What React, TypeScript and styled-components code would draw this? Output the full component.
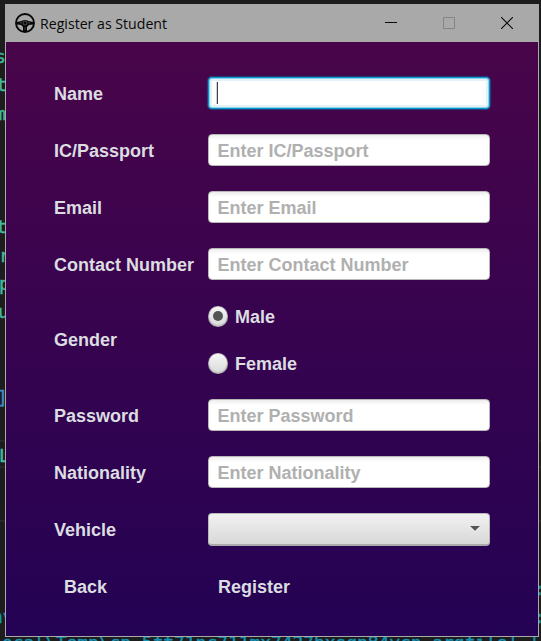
import React from "react";
import styled, { createGlobalStyle, css } from "styled-components";

const Global = createGlobalStyle`
  *, *::before, *::after { box-sizing: border-box; }
  html, body { margin: 0; overflow: hidden; background: #1d1d1d; }
`;

const Desktop = styled.main`
  position: relative;
  width: 541px;
  height: 641px;
  padding: 4px 2px 4px 5px;
  overflow: hidden;
  background: #1d1d1d;
  font-family: "Liberation Sans", Arial, sans-serif;
`;

const CodeFragment = styled.span<{ $x: number; $y: number; $color: string }>`
  position: absolute;
  left: ${(p) => p.$x}px;
  top: ${(p) => p.$y}px;
  color: ${(p) => p.$color};
  font: 18px/22px "DejaVu Sans Mono", monospace;
  letter-spacing: -0.08px;
  -webkit-text-stroke: 0.4px ${(p) => p.$color};
  white-space: pre;
`;

const GuideLine = styled.i<{ $y: number }>`
  position: absolute;
  left: 0;
  top: ${(p) => p.$y}px;
  width: 541px;
  height: 2px;
  background: #292929;
`;

const Window = styled.section`
  position: relative;
  width: 534px;
  height: 633px;
  border: 1px solid #a9a9a9;
  border-top: 0;
  background: linear-gradient(#4b0549, #240254);
  background-origin: border-box;
`;

const TitleBar = styled.header`
  display: flex;
  align-items: center;
  height: 38px;
  padding: 0 2px 0 9px;
  background: #a9a9a9;
`;

const Title = styled.h1`
  flex: 1;
  margin: 0 0 0 5px;
  color: #080808;
  font: 400 15px/20px "Open Sans", sans-serif;
  white-space: nowrap;
  span { display: inline-block; transform: scaleX(0.942); transform-origin: left; }
`;

const WindowButton = styled.button`
  display: grid;
  place-items: center;
  width: 58px;
  height: 38px;
  padding: 0;
  border: 0;
  background: none;
  svg { display: block; }
`;

const Form = styled.form`
  display: grid;
  grid-template-columns: 154px 282px;
  grid-template-rows: repeat(4, 32px) 69px repeat(4, 32px);
  row-gap: 25px;
  align-items: center;
  padding: 35px 0 0 48px;
`;

const textStyle = css`
  font: 700 18px/22px "Liberation Sans", Arial, sans-serif;
  white-space: nowrap;
`;

const Label = styled.label<{ $tall?: boolean }>`
  ${textStyle}
  padding-top: ${(p) => (p.$tall ? 0 : 2)}px;
  color: #dbdde0;
`;

const Input = styled.input`
  ${textStyle}
  width: 282px;
  height: 32px;
  padding: 2px 9px 0 8.5px;
  border: 1px solid #b8b8b8;
  border-radius: 4px;
  outline: 0;
  color: #333;
  background: linear-gradient(#ededed, #fff 5px);
  &::placeholder { color: #b0b0b0; opacity: 1; }
`;

const FocusedField = styled.div`
  display: flex;
  align-items: center;
  width: 282px;
  height: 32px;
  padding-left: 8px;
  border: 1px solid #0795cb;
  border-radius: 4px;
  background: #fff;
  box-shadow: inset 0 0 0 1px #8dd4eb, inset 0 0 0 3px #e3f2f7, 0 0 1px 1px #087eac80;
`;

const Caret = styled.i`
  width: 1px;
  height: 22px;
  background: #444;
  box-shadow: -1px 0 #cfcfcf;
`;

const Choices = styled.div`
  display: grid;
  grid-template-rows: 22px 22px;
  gap: 25px;
`;

const Choice = styled.label`
  ${textStyle}
  display: flex;
  align-items: center;
  gap: 7px;
  color: #dbdde0;
`;

const ChoiceText = styled.span`
  padding-top: 2px;
`;

const Radio = styled.span<{ $selected?: boolean }>`
  display: grid;
  place-items: center;
  width: 20px;
  height: 21px;
  border: 1px solid #b5b5b5;
  border-top-color: #ccc;
  border-radius: 50%;
  background: linear-gradient(#f5f5f5, #dadada);
  box-shadow: inset 0 1px 0 #fff, inset 0 -1px 0 #c4c4c4;
  &::after {
    content: "";
    width: 10px;
    height: 10px;
    border-radius: 50%;
    background: ${(p) => (p.$selected ? "#555" : "transparent")};
  }
`;

const Select = styled.button`
  display: flex;
  align-items: center;
  justify-content: flex-end;
  width: 282px;
  height: 33px;
  padding: 0 9px 0 0;
  border: 1px solid #b8b8b8;
  border-bottom: 2px solid #aaa;
  border-radius: 4px;
  background: linear-gradient(#f1f1f1, #d8d8d8);
`;

const Action = styled.button`
  ${textStyle}
  justify-self: start;
  padding: 2px 10px 0;
  border: 0;
  color: #dbdde0;
  background: none;
`;

const fragments = [
  { x: -5, y: 46, text: "s", color: "#42b9a0" },
  { x: -4, y: 74, text: "t", color: "#42b9a0" },
  { x: -5, y: 103, text: "m", color: "#42b9a0" },
  { x: -4, y: 216, text: "t", color: "#42b9a0" },
  { x: -1, y: 245, text: "r", color: "#42b9a0" },
  { x: -1, y: 273, text: "p", color: "#42b9a0" },
  { x: -2, y: 301, text: "u", color: "#42b9a0" },
  { x: -3, y: 387, text: "]", color: "#438dca" },
  { x: -1, y: 445, text: "L", color: "#42b9a0" },
  { x: -8, y: 606, text: "nv", color: "#1593b5" },
  { x: 2, y: 632, text: "ocal\\Temp\\cp_5ft71nc711mx7427bxsqp84ycn.argfile' '", color: "#1593b5" },
  { x: 534, y: 578, text: ":", color: "#1593b5" },
  { x: 534, y: 606, text: ":", color: "#1593b5" },
];

const WheelIcon = () => (
  <svg width="20" height="20" viewBox="0 0 20 20">
    <circle cx="10" cy="10" r="9" fill="none" stroke="#080808" strokeWidth="1.9" />
    <path d="M2 9L6.5 8Q10 5.8 13.5 8L18 9V11.5L14 12L12 14V18H8V14L6 12L2 11.5Z" fill="#080808" />
    <circle cx="10" cy="10" r="2" fill="none" stroke="#777" strokeWidth=".6" />
    <path d="M5 9.8h2m6 0h2M10 14v3" stroke="#666" strokeWidth=".6" />
  </svg>
);

export default function App() {
  return (
    <>
      <Global />
      <Desktop>
        <GuideLine $y={440} />
        <GuideLine $y={466} />
        <GuideLine $y={520} />
        {fragments.map((f) => (
          <CodeFragment key={`${f.x}-${f.y}`} $x={f.x} $y={f.y} $color={f.color}>{f.text}</CodeFragment>
        ))}
        <Window>
          <TitleBar>
            <WheelIcon />
            <Title><span>Register as Student</span></Title>
            <WindowButton aria-label="Minimize">
              <svg width="12" height="12"><path d="M0 5.5h12" stroke="#080808" /></svg>
            </WindowButton>
            <WindowButton aria-label="Maximize" disabled>
              <svg width="12" height="12"><path d="M.5.5h11v11H.5z" fill="none" stroke="#858585" /></svg>
            </WindowButton>
            <WindowButton aria-label="Close">
              <svg width="12" height="12"><path d="m0 0 12 12M12 0 0 12" stroke="#080808" strokeWidth="1.1" /></svg>
            </WindowButton>
          </TitleBar>
          <Form>
            <Label>Name</Label>
            <FocusedField><Caret /></FocusedField>
            <Label>IC/Passport</Label>
            <Input placeholder="Enter IC/Passport" />
            <Label>Email</Label>
            <Input placeholder="Enter Email" />
            <Label>Contact Number</Label>
            <Input placeholder="Enter Contact Number" />
            <Label $tall>Gender</Label>
            <Choices>
              <Choice><Radio $selected /><ChoiceText>Male</ChoiceText></Choice>
              <Choice><Radio /><ChoiceText>Female</ChoiceText></Choice>
            </Choices>
            <Label>Password</Label>
            <Input placeholder="Enter Password" />
            <Label>Nationality</Label>
            <Input placeholder="Enter Nationality" />
            <Label>Vehicle</Label>
            <Select type="button" aria-label="Vehicle">
              <svg width="10" height="6"><path d="M0 1h10L5 6z" fill="#fff" /><path d="M0 0h10L5 5z" fill="#555" /></svg>
            </Select>
            <Action type="button">Back</Action>
            <Action type="button">Register</Action>
          </Form>
        </Window>
      </Desktop>
    </>
  );
}
